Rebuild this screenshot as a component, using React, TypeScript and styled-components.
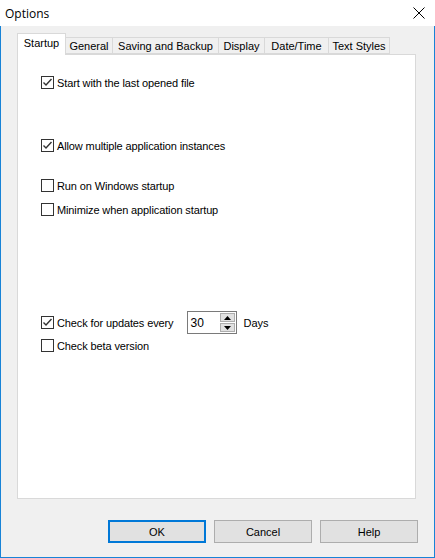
import styled, { createGlobalStyle } from 'styled-components';

const GlobalStyle = createGlobalStyle`
  html, body {
    margin: 0;
    padding: 0;
    background: #f0f0f0;
  }
  * {
    box-sizing: border-box;
  }
`;

const Window = styled.div`
  width: 435px;
  height: 558px;
  display: flex;
  flex-direction: column;
  font-family: 'Liberation Sans', Arial, sans-serif;
  font-size: 11px;
  color: #000;
`;

const TitleBar = styled.div`
  height: 26px;
  background: #fff;
  display: flex;
  align-items: center;
  justify-content: space-between;
  padding: 0 10px 0 5px;
`;

const Title = styled.div`
  font-family: 'Open Sans', 'Noto Sans', sans-serif;
  font-size: 12px;
  color: #000;
`;

const Body = styled.div`
  flex: 1;
  background: #f0f0f0;
  border: 1px solid #1883d7;
  border-top: none;
  display: flex;
  flex-direction: column;
  padding: 7px 18px 0 16px;
`;

const TabRow = styled.div`
  display: flex;
  align-items: flex-end;
  height: 21px;
  position: relative;
  z-index: 1;
`;

const Tab = styled.div<{ $w: number; $active?: boolean }>`
  width: ${(p) => p.$w}px;
  height: ${(p) => (p.$active ? 22 : 17)}px;
  margin-bottom: ${(p) => (p.$active ? -1 : 0)}px;
  margin-left: -1px;
  background: ${(p) => (p.$active ? '#fff' : '#f0f0f0')};
  border: 1px solid #d9d9d9;
  border-bottom: ${(p) => (p.$active ? 'none' : '1px solid #d9d9d9')};
  display: flex;
  align-items: center;
  justify-content: center;
  padding-bottom: ${(p) => (p.$active ? 3 : 0)}px;
  white-space: nowrap;

  &:first-child {
    margin-left: 0;
  }
`;

const Panel = styled.div`
  height: 445px;
  background: #fff;
  border: 1px solid #d9d9d9;
  padding: 19px 0 0 23px;
  display: flex;
  flex-direction: column;
  position: relative;
`;

/* faint watermark lying over the first row */
const Watermark = styled.div`
  position: absolute;
  left: 32px;
  top: 12px;
  font-family: 'Liberation Sans', Arial, sans-serif;
  font-weight: bold;
  font-size: 28px;
  color: rgba(0, 0, 0, 0.025);
  pointer-events: none;
`;

const Row = styled.div<{ $gap: number }>`
  display: flex;
  align-items: center;
  height: 17px;
  margin-top: ${(p) => p.$gap}px;
  white-space: nowrap;
  position: relative;
`;

const Box = styled.div`
  width: 13px;
  height: 13px;
  border: 1px solid #333;
  background: #fff;
  margin-right: 3px;
  display: flex;
  align-items: center;
  justify-content: center;
  flex-shrink: 0;
`;

const Label = styled.span`
  letter-spacing: -0.12px;
`;

const Spin = styled.div`
  width: 50px;
  height: 23px;
  border: 1px solid #7a7a7a;
  background: #fff;
  margin-left: 14px;
  display: flex;
  align-items: stretch;
  padding: 1px;
`;

const SpinValue = styled.div`
  flex: 1;
  display: flex;
  align-items: center;
  padding-left: 1px;
  font-size: 12px;
`;

const SpinButtons = styled.div`
  width: 15px;
  display: flex;
  flex-direction: column;
  gap: 1px;
`;

const SpinButton = styled.div`
  flex: 1;
  background: #e1e1e1;
  border: 1px solid #adadad;
  display: flex;
  align-items: center;
  justify-content: center;
`;

const Unit = styled.span`
  margin-left: 6px;
`;

const ButtonRow = styled.div`
  display: flex;
  justify-content: flex-end;
  gap: 8px;
  margin-top: 21px;
  margin-right: -2px;
`;

const Button = styled.div<{ $default?: boolean }>`
  width: 98px;
  height: 23px;
  background: #e1e1e1;
  border: ${(p) => (p.$default ? '2px solid #0078d7' : '1px solid #adadad')};
  display: flex;
  align-items: center;
  justify-content: center;
`;

const Check = ({ checked }: { checked?: boolean }) => (
  <Box>
    {checked && (
      <svg width="11" height="11" viewBox="0 0 11 11">
        <path d="M1.5 5.5 L4 8 L9.5 2" fill="none" stroke="#333" strokeWidth="1.4" />
      </svg>
    )}
  </Box>
);

const Arrow = ({ up }: { up?: boolean }) => (
  <svg width="7" height="4" viewBox="0 0 7 4">
    <path d={up ? 'M0 4 L3.5 0 L7 4 Z' : 'M0 0 L3.5 4 L7 0 Z'} fill="#000" />
  </svg>
);

const tabs = [
  { label: 'Startup', w: 49, active: true },
  { label: 'General', w: 48 },
  { label: 'Saving and Backup', w: 107 },
  { label: 'Display', w: 47 },
  { label: 'Date/Time', w: 65 },
  { label: 'Text Styles', w: 62 },
];

const App = () => {
  return (
    <Window>
      <GlobalStyle />
      <TitleBar>
        <Title>Options</Title>
        <svg width="12" height="12" viewBox="0 0 12 12">
          <path d="M0.5 0.5 L11.5 11.5 M11.5 0.5 L0.5 11.5" stroke="#000" strokeWidth="1" />
        </svg>
      </TitleBar>
      <Body>
        <TabRow>
          {tabs.map((t) => (
            <Tab key={t.label} $w={t.w} $active={t.active}>
              {t.label}
            </Tab>
          ))}
        </TabRow>
        <Panel>
          <Row $gap={0}>
            <Check checked />
            <Label>Start with the last opened file</Label>
          </Row>
          <Row $gap={46}>
            <Check checked />
            <Label>Allow multiple application instances</Label>
          </Row>
          <Row $gap={23}>
            <Check />
            <Label>Run on Windows startup</Label>
          </Row>
          <Row $gap={7}>
            <Check />
            <Label>Minimize when application startup</Label>
          </Row>
          <Row $gap={96}>
            <Check checked />
            <Label>Check for updates every</Label>
            <Spin>
              <SpinValue>30</SpinValue>
              <SpinButtons>
                <SpinButton>
                  <Arrow up />
                </SpinButton>
                <SpinButton>
                  <Arrow />
                </SpinButton>
              </SpinButtons>
            </Spin>
            <Unit>Days</Unit>
          </Row>
          <Row $gap={6}>
            <Check />
            <Label>Check beta version</Label>
          </Row>
          <Watermark>SOFTPEDIA</Watermark>
        </Panel>
        <ButtonRow>
          <Button $default>OK</Button>
          <Button>Cancel</Button>
          <Button>Help</Button>
        </ButtonRow>
      </Body>
    </Window>
  );
};

export default App;
